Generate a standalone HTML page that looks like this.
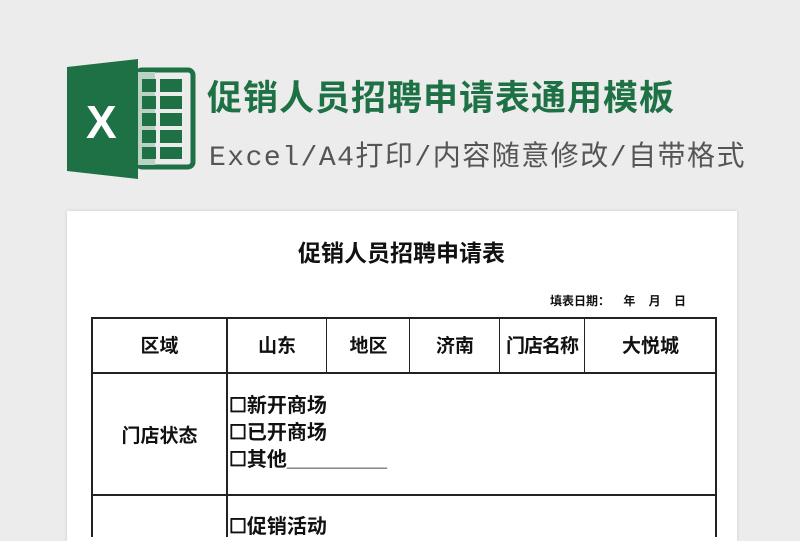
<!DOCTYPE html>
<html><head><meta charset="utf-8"><style>
body{margin:0;width:800px;height:526px;background:#ececec;position:relative;overflow:hidden;font-family:"Liberation Sans","Noto Sans CJK SC",sans-serif}
.t{position:absolute;white-space:nowrap}
.paper{position:absolute;left:67px;top:211px;width:670px;height:330px;background:#fff;box-shadow:0 0 3px rgba(0,0,0,.15)}
.c{position:absolute;font-weight:bold;font-size:19px;color:#111;text-align:center}
.l{position:absolute;background:#222}
</style></head><body>
<svg style="position:absolute;left:60px;top:55px" width="140" height="130">
<rect x="77" y="15" width="56" height="97" rx="5" fill="none" stroke="#1e7145" stroke-width="5"/>
<rect x="77" y="17" width="18" height="93" fill="#bcd0c4"/>
<g fill="#1e7145">
<rect x="82" y="24" width="14" height="13"/><rect x="100" y="24" width="22" height="13"/>
<rect x="82" y="41" width="14" height="13"/><rect x="100" y="41" width="22" height="13"/>
<rect x="82" y="58" width="14" height="13"/><rect x="100" y="58" width="22" height="13"/>
<rect x="82" y="75" width="14" height="13"/><rect x="100" y="75" width="22" height="13"/>
<rect x="82" y="92" width="14" height="12"/><rect x="100" y="92" width="22" height="12"/>
</g>
<polygon points="7,12 78,4 78,124 7,116" fill="#1e7145"/>
<text x="26" y="83" font-family="Liberation Sans" font-weight="bold" font-size="46" fill="#fff">X</text>
</svg>
<div class="t" style="left:207px;top:70px;font-size:35px;font-weight:bold;color:#1e7145;letter-spacing:1px">促销人员招聘申请表通用模板</div>
<div class="t" style="left:209px;top:134px;font-size:28px;color:#555;letter-spacing:1.5px;font-family:'Liberation Mono','Noto Sans CJK SC',monospace">Excel/A4打印/内容随意修改/自带格式</div>
<div class="paper"></div>
<div class="t" style="left:298px;top:234px;font-size:23px;font-weight:bold;color:#111">促销人员招聘申请表</div>
<div class="t" style="left:550px;top:292px;font-size:12px;font-weight:bold;color:#111">填表日期：&nbsp;&nbsp;&nbsp;&nbsp;年&nbsp;&nbsp;&nbsp;&nbsp;月&nbsp;&nbsp;&nbsp;&nbsp;日</div>
<div class="l" style="left:91px;top:317px;width:626px;height:2px"></div>
<div class="l" style="left:91px;top:372px;width:626px;height:2px"></div>
<div class="l" style="left:91px;top:494px;width:626px;height:2px"></div>
<div class="l" style="left:91px;top:317px;width:2px;height:220px"></div>
<div class="l" style="left:226px;top:317px;width:2px;height:220px"></div>
<div class="l" style="left:715px;top:317px;width:2px;height:220px"></div>
<div class="l" style="left:326px;top:317px;width:1px;height:56px"></div>
<div class="l" style="left:409px;top:317px;width:1px;height:56px"></div>
<div class="l" style="left:499px;top:317px;width:1px;height:56px"></div>
<div class="l" style="left:584px;top:317px;width:1px;height:56px"></div>
<div class="c" style="left:92px;top:331px;width:135px">区域</div>
<div class="c" style="left:227px;top:331px;width:100px">山东</div>
<div class="c" style="left:327px;top:331px;width:83px">地区</div>
<div class="c" style="left:410px;top:331px;width:90px">济南</div>
<div class="c" style="left:498px;top:331px;width:88px;letter-spacing:-1px">门店名称</div>
<div class="c" style="left:585px;top:331px;width:131px">大悦城</div>
<div class="c" style="left:92px;top:421px;width:135px">门店状态</div>
<div class="t" style="left:229px;top:393px;font-size:20px;font-weight:bold;line-height:27px;color:#111">☐新开商场<br>☐已开商场<br>☐其他_________</div>
<div class="t" style="left:229px;top:510px;font-size:20px;font-weight:bold;color:#111">☐促销活动</div>
</body></html>
